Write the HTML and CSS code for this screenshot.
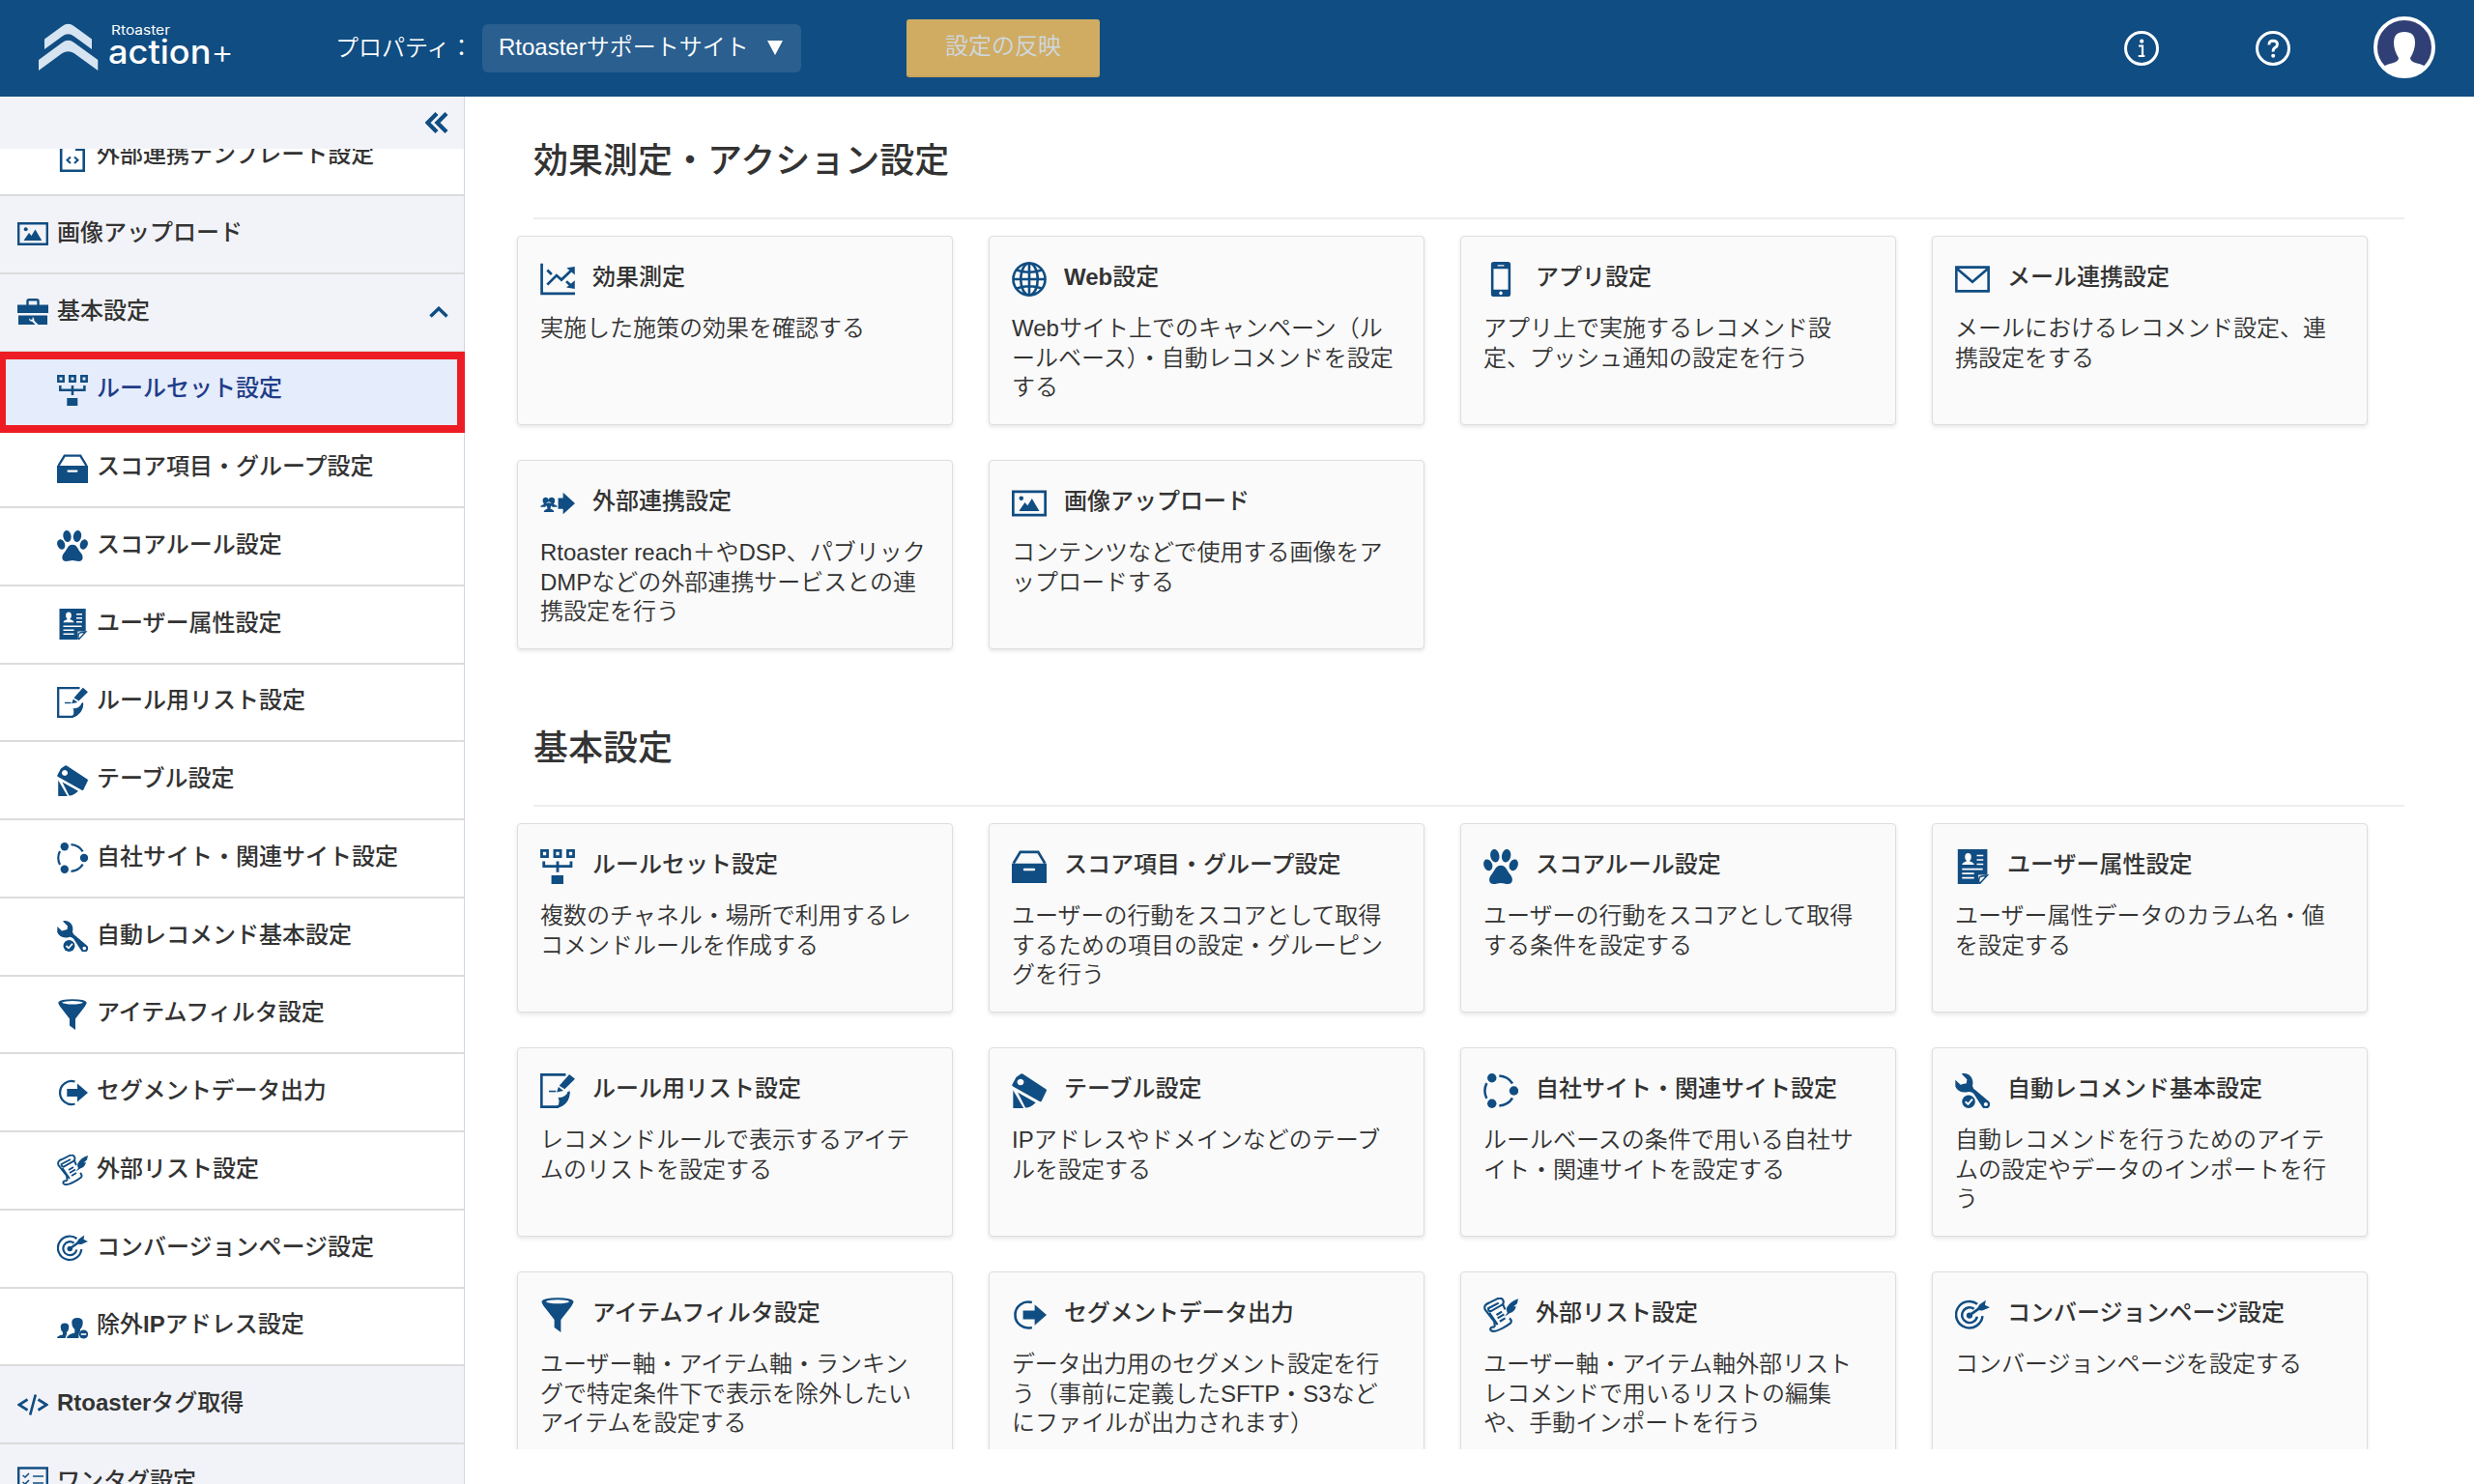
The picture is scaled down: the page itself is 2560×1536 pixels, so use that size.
FILE: index.html
```
<!DOCTYPE html>
<html lang="ja">
  <head>
    <meta charset="UTF-8" />
    <meta name="viewport" content="width=device-width, initial-scale=1.0" />
    <title>Rtoaster action+</title>
    <link rel="stylesheet" href="styles.css">
  </head>
  <body>
    <!-- icons -->
    <svg class="sprite" xmlns="http://www.w3.org/2000/svg">
      <symbol id="template" viewBox="0 0 32 32">
        <path d="M4.200 1.300H19L27.700 9V30.700H4.200Z" fill="none" stroke="currentColor" stroke-width="2.600" />
        <path d="M19 1V10H28Z" />
        <path d="M14 16.500L10.500 19.700L14 23M18 16.500L21.500 19.700L18 23" fill="none" stroke="currentColor" stroke-width="2" />
      </symbol>
      <symbol id="image" viewBox="0 0 32 32">
        <path d="M1.200 5.200H30.800V26.800H1.200Z" fill="none" stroke="currentColor" stroke-width="2.400" />
        <circle cx="8.700" cy="11.300" r="2" />
        <path d="M6.500 23L12 15L14.500 18L18.500 11.500L25.300 23Z" />
      </symbol>
      <symbol id="toolbox" viewBox="0 0 32 32">
        <path d="M10.500 9V4.500Q10.500 3.200 12 3.200H20Q21.500 3.200 21.500 4.500V9" fill="none" stroke="currentColor" stroke-width="2.400" />
        <path d="M0 8.500H32V17H0Z M1 19.500H31V29H21.500L17.500 25Q17.800 22 15.500 21L15.800 23.300L14 24L12 22.500Q12 25.500 15.500 26L18.500 29H1Z" />
      </symbol>
      <symbol id="ruleset" viewBox="0 0 32 32">
        <path d="M1.300 1.300H6.700V6.700H1.300ZM13.300 1.300H18.700V6.700H13.300ZM25.300 1.300H30.700V6.700H25.300ZM3.300 11V15.700H28.400V11M16 11V21" fill="none" stroke="currentColor" stroke-width="2.500" />
        <path d="M10.300 24H21.300V32H10.300Z" />
      </symbol>
      <symbol id="drawer" viewBox="0 0 32 32">
        <path d="M1.500 13L7.800 2.600H24.200L30.500 13" fill="none" stroke="currentColor" stroke-width="2.400" />
        <path fill-rule="evenodd" d="M0 13H32V31H0Z M11.500 17.500H20.500Q21.500 17.500 21.500 18.600T20.500 19.800H11.500Q10.500 19.800 10.500 18.600T11.500 17.500Z" />
      </symbol>
      <symbol id="paw" viewBox="0 0 32 32">
        <ellipse cx="10.500" cy="6" rx="4.100" ry="6" transform="rotate(-10 10.500 6)" />
        <ellipse cx="21" cy="6" rx="4.100" ry="6" transform="rotate(10 21 6)" />
        <ellipse cx="4.200" cy="14.500" rx="3.900" ry="5.400" transform="rotate(-20 4.200 14.500)" />
        <ellipse cx="27.800" cy="14.500" rx="3.900" ry="5.400" transform="rotate(20 27.800 14.500)" />
        <path d="M16 14.800C21 14.800 21.500 20 24.500 23C28 27 27 32 22.500 32C20 32 18.500 31 16 31S12 32 9.500 32C5 32 4 27 7.500 23C10.500 20 11 14.800 16 14.800Z" />
      </symbol>
      <symbol id="profile" viewBox="0 0 32 32">
        <path d="M2.500 0H29.700V23.500H21.500V32H2.500Z" />
        <path d="M29.700 24L22.300 32Q21.300 27 23 25.300Q25 24.500 29.700 24Z" fill="none" stroke="currentColor" stroke-width="1.400" />
        <g class="cut">
          <ellipse cx="12" cy="7" rx="2.900" ry="3.500" />
          <path d="M6.500 14.300Q6.500 12.300 10.500 11.200V9H13.500V11.200Q17.500 12.300 17.500 14.300Z" />
          <path d="M20 5H26V6.500H20ZM20 9H26V10.500H20ZM20 13H26V14.500H20ZM6.500 17.500H25.500V19H6.500ZM6.500 21.500H17.500V23H6.500ZM6.500 25.500H17.500V27H6.500Z" />
        </g>
      </symbol>
      <symbol id="rulelist" viewBox="0 0 32 32">
        <path d="M23.500 1.200H1.200V30.800H15.500Q26 27.500 26.200 17" fill="none" stroke="currentColor" stroke-width="2.300" />
        <path d="M27 15.500Q27.500 27 15.500 32Q18.500 27 16.500 22Q22 23.500 27 15.500Z" />
        <path d="M17.500 11.300L26.800 .8L32 5.200L22.500 14.500Z M16.800 12.500L21.300 16L15.200 17.300Z" />
        <path d="M8 16.500H14.500" stroke="currentColor" stroke-width="1.400" />
      </symbol>
      <symbol id="table" viewBox="0 0 32 32">
        <path fill-rule="evenodd" d="M8.300 .4Q9 0 10 .5L31.300 14.500Q32.300 15.200 31.800 16.300L27.300 25.500Q26.700 26.500 25.500 25.800L1 12Q0 11.500 .4 10.300L4 3.500Z M8 5A3 3 0 1 0 8.010 5Z" />
        <path d="M1.200 15.500L10.800 32H1.200ZM5.500 17.500L22 26.800Q16.500 32 12.500 31.500Z" />
      </symbol>
      <symbol id="sites" viewBox="0 0 32 32">
        <circle cx="7.800" cy="4.200" r="4.200" /><circle cx="28" cy="16" r="4.200" /><circle cx="7.800" cy="27.800" r="4.200" />
        <path d="M14.500 2.200Q22.500 2.700 26.700 9.300M3 9Q-.5 16 3 23M14.500 29.800Q22.500 29.300 26.700 22.700" fill="none" stroke="currentColor" stroke-width="2.200" />
      </symbol>
      <symbol id="wrench" viewBox="0 0 32 32">
        <path fill-rule="evenodd" d="M6 .5C12-1.500 18 4 16 11.500Q16.500 14 19 15.500L30.800 25.500A4 4 0 0 1 25.500 31.500L17 18.500Q14 16 11.500 17.200Q3 18.500 .3 12V6L5 10.500L10.500 9L11 5.500ZM28.300 26.700A1.800 1.800 0 1 0 28.310 26.700Z" />
        <circle cx="12.500" cy="26" r="6" />
        <path d="M9.500 26L12 28.300L16 23.700" fill="none" class="cut-line" stroke-width="1.700" />
      </symbol>
      <symbol id="filter" viewBox="0 0 32 32">
        <path fill-rule="evenodd" d="M1.300 3.500Q3 .3 16 .3T30.700 3.500Q30.500 5.500 27.500 9.500L19 20.500V32L13 27.500V20.500L4.500 9.500Q1.300 5.500 1.300 3.500ZM5 3.700Q8 5.500 16 5.500T27 3.700Q24 2 16 2T5 3.700Z" />
      </symbol>
      <symbol id="output" viewBox="0 0 32 32">
        <path d="M18.500 4.500A12 12 0 1 0 18.500 27.500" fill="none" stroke="currentColor" stroke-width="2.300" />
        <path d="M10.300 12H21V6.500L32 16L21 25.500V20H10.300Z" />
      </symbol>
      <symbol id="scroll" viewBox="0 0 32 32">
        <path d="M10.500 27C5 27 5.500 31 9 31C13 31.500 22 26 25 23.500C26.500 21.500 25 20 24 19M10.500 27L10 22L1.500 11C.3 8 2 6 5 5L13 1C17-.5 20 3 17.500 6.500L7 12.500Q4.500 13 4.500 10L14 5M18 6.500L20 11M5.500 14L13 25M12 16L17 13M13 19L19 15.500M15 22L20 19" fill="none" stroke="currentColor" stroke-width="1.900" />
        <path d="M32 1Q25 3 21.500 9Q20.500 12 22 14L19.500 17.500L24 14.500Q29 13 30 8L27.500 8.500L31 5.500Z" />
      </symbol>
      <symbol id="target" viewBox="0 0 32 32">
        <path d="M20.500 6A12.200 12.200 0 1 0 25.300 17M17.500 10.500A7 7 0 1 0 20.300 17.500" fill="none" stroke="currentColor" stroke-width="2.200" />
        <circle cx="13.300" cy="16.500" r="2.800" />
        <path d="M13 16.500L23 9.500" stroke="currentColor" stroke-width="2.400" />
        <path d="M19.500 11.500L22.500 6.500L28.300 2.500L27.500 6.800L32 9L25 12Z" />
      </symbol>
      <symbol id="excludeip" viewBox="0 0 32 32">
        <path d="M0 28Q0 25.500 6 24.500V22Q3.700 20 3.700 16.500Q3.700 12.500 8 12.500T12.300 16.500Q12.300 20 10 22V24Q9.500 25.500 8.500 28ZM10 28Q10.500 24 18.300 22.500V19Q15.300 16.500 15.300 11.500Q15.300 7 21 7T26.700 11.500Q26.700 16.500 24 19V21Q22 23 22.500 28Z" />
        <circle cx="27.500" cy="24" r="4.600" />
        <path d="M24.800 24H30.200" class="cut-line" stroke-width="1.600" />
      </symbol>
      <symbol id="tag" viewBox="0 0 32 32">
        <path d="M10.500 10.500L1.700 16L10.500 21.500M21.500 10.500L30.300 16L21.500 21.500M18.800 5.500L13.200 26.500" fill="none" stroke="currentColor" stroke-width="2.700" />
      </symbol>
      <symbol id="onetag" viewBox="0 0 32 32">
        <path d="M1.200 1.500H30.800V30H1.200Z" fill="none" stroke="currentColor" stroke-width="2.400" />
        <path d="M5.500 9L8 11L12 7M5.500 16L8 18L12 14M16 10H27M16 17H27M16 24H27M5.500 23L8 25L12 21" fill="none" stroke="currentColor" stroke-width="1.600" />
      </symbol>
      <symbol id="effect" viewBox="0 0 32 32">
        <path d="M1.400 1.500V29.200H32M6.500 21L15 12.500L19.500 16.500L28.500 8M6.500 7.500L10.500 11.500M24 18L28.500 22" fill="none" stroke="currentColor" stroke-width="2.400" />
        <path d="M31.800 4.500V12L24.300 5.500ZM31.800 17V24.800L24 23.500Z" />
      </symbol>
      <symbol id="web" viewBox="0 0 32 32">
        <g fill="none" stroke="currentColor" stroke-width="2.300">
          <circle cx="16" cy="16" r="14.700" />
          <ellipse cx="16" cy="16" rx="7.800" ry="14.700" />
          <path d="M16 1V31M1 16H31M4.500 7.500Q16 11.500 27.500 7.500M4.500 24.500Q16 20.500 27.500 24.500" />
        </g>
      </symbol>
      <symbol id="app" viewBox="0 0 32 32">
        <path fill-rule="evenodd" d="M9.500 0H22.500Q25 0 25 2.500V29.500Q25 32 22.500 32H9.500Q7 32 7 29.500V2.500Q7 0 9.500 0ZM9.300 6.500V25.500H22.700V6.500ZM13 2.800V4H19V2.800ZM16 27.200A1.600 1.600 0 1 0 16.010 27.200Z" />
      </symbol>
      <symbol id="mail" viewBox="0 0 32 32">
        <path d="M1.200 5H30.800V27H1.200ZM1.500 6L16 18.500L30.500 6" fill="none" stroke="currentColor" stroke-width="2.300" />
      </symbol>
      <symbol id="external" viewBox="0 0 32 32">
        <path d="M16.500 11H21V6L32 16L21 26V21H16.500Z" />
        <path d="M0 19.300Q.5 17.500 3.500 16.800Q1.800 14.500 2.300 12.500Q3 10.500 5 10.500T7.700 12.500Q8 10.500 10.500 10.500T13.500 13Q13.500 15.500 12.300 16.800Q15.500 17.500 15.700 19.300H11Q11 18 9.800 17.500Q11 15 8 14.500Q4.800 15 6 17.500Q5 18 4.800 19.300ZM3.300 24Q3.500 21.500 6.500 21V19.500Q5.500 18.500 5.500 16.800Q5.800 15.300 8 15.300T10.500 16.800Q10.500 18.500 9.500 19.500V21Q12.500 21.500 12.700 24Z" />
      </symbol>
    </svg>

    <header class="header">
      <svg class="logo" width="210" height="60" viewBox="0 0 210 60">
        <path d="M6 20.500L24.500 7Q30.500 2.600 36.500 7L55 20.500V31L36.500 17.500Q30.500 13.200 24.500 17.500L6 31Z" fill="#d6e4f2" />
        <path d="M0 42L24.500 24Q30.500 19.700 36.500 24L61.300 42V53L36.500 35Q30.500 31.500 24.500 35L0 53Z" fill="#d6e4f2" />
        <text x="75" y="16" class="logo-sub" textLength="61" lengthAdjust="spacingAndGlyphs">Rtoaster</text>
        <text x="72" y="45.500" class="logo-main" textLength="130" lengthAdjust="spacingAndGlyphs">action<tspan class="logo-plus">+</tspan></text>
      </svg>
      <span class="prop-label">プロパティ：</span>
      <div class="prop-select"><span>Rtoasterサポートサイト</span><i class="caret"></i></div>
      <button class="apply-btn">設定の反映</button>
      <div class="header-icons">
        <svg width="36" height="36" viewBox="0 0 36 36">
          <circle cx="18" cy="18" r="16.500" fill="none" stroke="#fff" stroke-width="3" />
          <circle cx="18.200" cy="10.700" r="2.100" fill="#fff" />
          <path d="M15 15.500H19V26M14.700 26H21.300" fill="none" stroke="#fff" stroke-width="2.200" />
        </svg>
        <svg width="36" height="36" viewBox="0 0 36 36">
          <circle cx="18" cy="18" r="16.500" fill="none" stroke="#fff" stroke-width="3" />
          <path d="M14 14.300Q13.700 10.200 18 10.200T22.500 13.700Q22.500 16 20.200 17.300T18.200 21.500" fill="none" stroke="#fff" stroke-width="2.900" />
          <circle cx="18.200" cy="25.700" r="2" fill="#fff" />
        </svg>
        <svg width="64" height="64" viewBox="0 0 64 64">
          <circle cx="32" cy="32" r="30" fill="#303f75" />
          <path d="M11 52Q12 50 19 48.500Q26 46.500 26 43Q21 35 21 27Q21 16 32 16T43 27Q43 35 38 43Q38 46.500 45 48.500Q52 50 53 52Q44 61 32 61T11 52Z" fill="#fff" />
          <circle cx="32" cy="32" r="30" fill="none" stroke="#fff" stroke-width="4" />
        </svg>
      </div>
    </header>

    <div class="wrap">
      <nav class="side">
        <div class="side-toggle">
          <svg width="24" height="22" viewBox="0 0 24 22"><path d="M12 1.500L2.500 11L12 20.500M22 1.500L12.500 11L22 20.500" fill="none" stroke="currentColor" stroke-width="4.300" /></svg>
        </div>
        <div class="side-scroll">
          <ul class="menu">
            <li class="sub"><svg><use href="#template" /></svg><span>外部連携テンプレート設定</span></li>
            <li><svg><use href="#image" /></svg><span>画像アップロード</span></li>
            <li>
              <svg><use href="#toolbox" /></svg><span>基本設定</span>
              <svg class="fold" viewBox="0 0 20 12"><path d="M1.500 10.500L10 2.300L18.500 10.500" fill="none" stroke="currentColor" stroke-width="3.500" /></svg>
            </li>
            <li class="sub active"><svg><use href="#ruleset" /></svg><span>ルールセット設定</span></li>
            <li class="sub"><svg><use href="#drawer" /></svg><span>スコア項目・グループ設定</span></li>
            <li class="sub"><svg><use href="#paw" /></svg><span>スコアルール設定</span></li>
            <li class="sub"><svg><use href="#profile" /></svg><span>ユーザー属性設定</span></li>
            <li class="sub"><svg><use href="#rulelist" /></svg><span>ルール用リスト設定</span></li>
            <li class="sub"><svg><use href="#table" /></svg><span>テーブル設定</span></li>
            <li class="sub"><svg><use href="#sites" /></svg><span>自社サイト・関連サイト設定</span></li>
            <li class="sub"><svg><use href="#wrench" /></svg><span>自動レコメンド基本設定</span></li>
            <li class="sub"><svg><use href="#filter" /></svg><span>アイテムフィルタ設定</span></li>
            <li class="sub"><svg><use href="#output" /></svg><span class="pkna">セグメントデータ出力</span></li>
            <li class="sub"><svg><use href="#scroll" /></svg><span>外部リスト設定</span></li>
            <li class="sub"><svg><use href="#target" /></svg><span>コンバージョンページ設定</span></li>
            <li class="sub"><svg><use href="#excludeip" /></svg><span>除外<b>IP</b>アドレス設定</span></li>
            <li><svg><use href="#tag" /></svg><span><b>Rtoaster</b>タグ取得</span></li>
            <li><svg><use href="#onetag" /></svg><span>ワンタグ設定</span></li>
          </ul>
        </div>
      </nav>

      <main class="main">
        <section>
          <h2>効果測定・アクション設定</h2>
          <div class="cards">
            <div class="card">
              <h3><svg><use href="#effect" /></svg><span>効果測定</span></h3>
              <p>実施した施策の効果を確認する</p>
            </div>
            <div class="card">
              <h3><svg><use href="#web" /></svg><span><b>Web</b>設定</span></h3>
              <p>Webサイト上でのキャンペーン（ル<br>ールベース）・自動レコメンドを設定<br>する</p>
            </div>
            <div class="card">
              <h3><svg><use href="#app" /></svg><span>アプリ設定</span></h3>
              <p>アプリ上で実施するレコメンド設<br>定、プッシュ通知の設定を行う</p>
            </div>
            <div class="card">
              <h3><svg><use href="#mail" /></svg><span>メール連携設定</span></h3>
              <p>メールにおけるレコメンド設定、連<br>携設定をする</p>
            </div>
            <div class="card">
              <h3><svg><use href="#external" /></svg><span>外部連携設定</span></h3>
              <p>Rtoaster reach＋やDSP、パブリック<br>DMPなどの外部連携サービスとの連<br>携設定を行う</p>
            </div>
            <div class="card">
              <h3><svg><use href="#image" /></svg><span>画像アップロード</span></h3>
              <p>コンテンツなどで使用する画像をア<br>ップロードする</p>
            </div>
          </div>
        </section>

        <section>
          <h2>基本設定</h2>
          <div class="cards">
            <div class="card">
              <h3><svg><use href="#ruleset" /></svg><span>ルールセット設定</span></h3>
              <p>複数のチャネル・場所で利用するレ<br>コメンドルールを作成する</p>
            </div>
            <div class="card">
              <h3><svg><use href="#drawer" /></svg><span>スコア項目・グループ設定</span></h3>
              <p>ユーザーの行動をスコアとして取得<br>するための項目の設定・グルーピン<br>グを行う</p>
            </div>
            <div class="card">
              <h3><svg><use href="#paw" /></svg><span>スコアルール設定</span></h3>
              <p>ユーザーの行動をスコアとして取得<br>する条件を設定する</p>
            </div>
            <div class="card">
              <h3><svg><use href="#profile" /></svg><span>ユーザー属性設定</span></h3>
              <p>ユーザー属性データのカラム名・値<br>を設定する</p>
            </div>
            <div class="card">
              <h3><svg><use href="#rulelist" /></svg><span>ルール用リスト設定</span></h3>
              <p>レコメンドルールで表示するアイテ<br>ムのリストを設定する</p>
            </div>
            <div class="card">
              <h3><svg><use href="#table" /></svg><span>テーブル設定</span></h3>
              <p>IPアドレスやドメインなどのテーブ<br>ルを設定する</p>
            </div>
            <div class="card">
              <h3><svg><use href="#sites" /></svg><span>自社サイト・関連サイト設定</span></h3>
              <p>ルールベースの条件で用いる自社サ<br>イト・関連サイトを設定する</p>
            </div>
            <div class="card">
              <h3><svg><use href="#wrench" /></svg><span>自動レコメンド基本設定</span></h3>
              <p>自動レコメンドを行うためのアイテ<br>ムの設定やデータのインポートを行<br>う</p>
            </div>
            <div class="card">
              <h3><svg><use href="#filter" /></svg><span>アイテムフィルタ設定</span></h3>
              <p>ユーザー軸・アイテム軸・ランキン<br>グで特定条件下で表示を除外したい<br>アイテムを設定する</p>
            </div>
            <div class="card">
              <h3><svg><use href="#output" /></svg><span class="pkna">セグメントデータ出力</span></h3>
              <p><span class="pkna">データ出力用のセグメント設定を行</span><br>う（事前に定義したSFTP・S3など<br>にファイルが出力されます）</p>
            </div>
            <div class="card">
              <h3><svg><use href="#scroll" /></svg><span>外部リスト設定</span></h3>
              <p>ユーザー軸・アイテム軸外部リスト<br>レコメンドで用いるリストの編集<br>や、手動インポートを行う</p>
            </div>
            <div class="card">
              <h3><svg><use href="#target" /></svg><span>コンバージョンページ設定</span></h3>
              <p>コンバージョンページを設定する</p>
            </div>
          </div>
        </section>
      </main>
    </div>
  </body>
</html>
```
FILE: styles.css
```
*,
*::after {
  box-sizing: border-box;
  margin: 0;
  padding: 0;
}

body {
  height: 1536px;
  overflow: hidden;
  font-family: "Liberation Sans", "Noto Sans CJK JP", sans-serif;
  font-size: 24px;
  font-weight: 350;
  line-height: 30.6px;
  color: #333;
  background: #fff;
}

b {
  font-weight: 700;
}

svg {
  fill: currentColor;
}

.sprite {
  position: absolute;
  width: 0;
  height: 0;
}

.cut {
  fill: #fff;
}
.cut-line {
  stroke: #fff;
}

/* header */
.header {
  display: flex;
  align-items: center;
  height: 100px;
  padding: 0 40px;
  color: #fff;
  background: #104d82;
}
.logo {
  flex: none;
  margin-right: 97px;
  fill: #fff;
  font-family: Inter, sans-serif;
}
.logo-sub {
  font-size: 13px;
  font-weight: 400;
}
.logo-main {
  font-size: 34px;
  font-weight: 500;
}
.logo-plus {
  font-weight: 300;
}
.prop-label {
  width: 152px;
  white-space: nowrap;
}
.prop-select {
  display: flex;
  align-items: center;
  justify-content: space-between;
  width: 330px;
  height: 50px;
  margin-right: 109px;
  padding: 0 19px 2px 17px;
  border-radius: 6px;
  background: #2a5f8f;
  white-space: nowrap;
}
.caret {
  border: 8px solid transparent;
  border-top: 15px solid #fff;
  border-bottom: 0;
}
.apply-btn {
  width: 200px;
  height: 60px;
  padding-bottom: 2px;
  border: 0;
  border-bottom: 2px solid #c7a35c;
  border-radius: 3px;
  font: inherit;
  color: #cfd8e0;
  background: #cfac62;
}
.header-icons {
  display: flex;
  align-items: center;
  margin-left: auto;
}
.header-icons svg:nth-child(2) {
  margin: 0 86px 0 100px;
}
.header-icons svg:last-child {
  margin-bottom: 2px;
}

.wrap {
  display: flex;
  height: 1436px;
}

/* side menu */
.side {
  display: flex;
  flex-direction: column;
  width: 481px;
  border-right: 1px solid #cfd6e6;
}
.side-toggle {
  display: flex;
  align-items: center;
  justify-content: flex-end;
  height: 54px;
  padding-right: 16px;
  color: #104d82;
  background: #f2f3f8;
}
.side-scroll {
  flex: 1;
  margin-right: -1px;
  overflow: hidden;
}
.menu {
  margin-top: -31.75px;
  list-style: none;
}
.menu li {
  position: relative;
  display: flex;
  align-items: center;
  height: 80.75px;
  margin-right: 1px;
  padding-left: 18px;
  border-bottom: 2px solid #dcdcdc;
  font-weight: 500;
  background: #f2f3f8;
}
.menu li svg {
  width: 32px;
  height: 32px;
  margin-right: 9px;
  color: #104d82;
}
.menu li span {
  padding-bottom: 2.500px;
}
.menu li .fold {
  width: 20px;
  height: 12px;
  margin: 0 16px 0 auto;
}
.menu .sub {
  padding-left: 59px;
  background: #fff;
}
.menu .active {
  color: #1f3d88;
  background: #e5ecfb;
}
/* red frame drawn over the row borders */
.menu .active::after {
  content: "";
  position: absolute;
  top: -1px;
  left: 0;
  z-index: 1;
  width: 481px;
  height: 84px;
  border: 8px solid #ed1c24;
  border-left-width: 6px;
}

.pkna {
  letter-spacing: -0.25px;
}

/* main */
.main {
  flex: 1;
  height: 1400px;
  padding: 0 72px 0 54px;
  overflow: hidden;
}
section {
  height: 608px;
}
section h2 {
  height: 127px;
  margin: 0 0 17px 17px;
  padding-top: 46px;
  border-bottom: 2px solid #eee;
  font-size: 36px;
  font-weight: 500;
  line-height: 42px;
}
.cards {
  display: grid;
  grid-template-columns: repeat(4, 451px);
  grid-auto-rows: 195.5px;
  gap: 36.5px 37px;
}
.card {
  padding: 26px 0 0 23px;
  border: 1px solid #dedede;
  border-radius: 4px;
  background: #fafafa;
  box-shadow: 0 2px 4px rgba(0, 0, 0, 0.1);
  white-space: nowrap;
}
.card h3 {
  display: flex;
  align-items: center;
  height: 36px;
  margin-bottom: 18px;
  font-size: 24px;
  font-weight: 500;
}
.card h3 span {
  padding-bottom: 2.500px;
}
.card h3 svg {
  width: 36px;
  height: 36px;
  margin-right: 18px;
  color: #104d82;
}
```
